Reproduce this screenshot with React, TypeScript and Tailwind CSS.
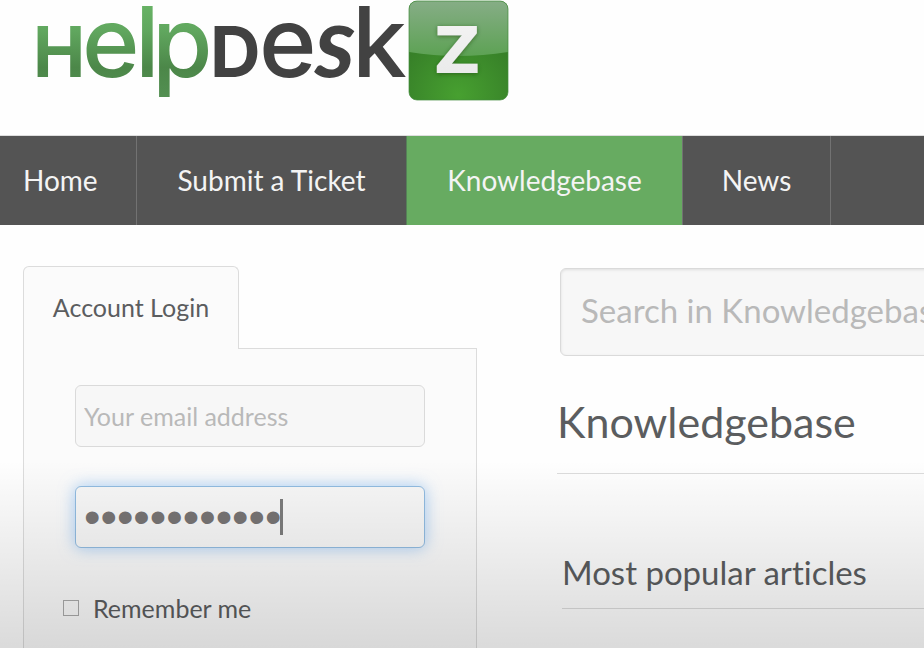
import { useState } from "react";

const navItems = [
  { label: "Home", className: "w-[137px] pl-[23px] text-left border-[#727272]" },
  { label: "Submit a Ticket", className: "w-[270px] text-center border-[#568158]" },
  { label: "Knowledgebase", className: "w-[276px] text-center bg-[#67ab61] border-[#727272]", active: true },
  { label: "News", className: "w-[148px] text-center border-[#727272]" },
];

function Logo() {
  return (
    <svg width="520" height="112" viewBox="0 0 520 112" role="img" aria-label="HelpDeskZ" className="block">
      <defs>
        <linearGradient id="leaf" gradientUnits="userSpaceOnUse" x1="0" y1="0" x2="0" y2="104">
          <stop offset="0" stopColor="#69b566" />
          <stop offset="0.3" stopColor="#60a65e" />
          <stop offset="0.65" stopColor="#4c8749" />
          <stop offset="1" stopColor="#549153" />
        </linearGradient>
        <radialGradient id="tile" cx="0.5" cy="0.95" r="0.75">
          <stop offset="0" stopColor="#47a030" />
          <stop offset="1" stopColor="#347a27" />
        </radialGradient>
        <linearGradient id="gloss" x1="0" y1="0" x2="0" y2="1">
          <stop offset="0" stopColor="#86ad86" />
          <stop offset="1" stopColor="#5da254" />
        </linearGradient>
        <linearGradient id="silver" x1="0" y1="0" x2="0" y2="1">
          <stop offset="0" stopColor="#f4f4f4" />
          <stop offset="1" stopColor="#e8e8e8" />
        </linearGradient>
        <filter id="shade" x="-20%" y="-20%" width="140%" height="140%">
          <feDropShadow dx="0" dy="1" stdDeviation="2" floodColor="#1d4a17" floodOpacity="0.6" />
        </filter>
        <clipPath id="tileShape">
          <rect x="409" y="1" width="99" height="99" rx="8" />
        </clipPath>
      </defs>
      <g fontFamily="Inter, sans-serif" fontWeight="500" fill="url(#leaf)">
        <text x="33" y="77" fontSize="70" fontWeight="700">H</text>
        <text x="82" y="77" fontSize="98">e</text>
        <text x="135" y="77" fontSize="98">l</text>
        <text x="152" y="77" fontSize="98">p</text>
      </g>
      <g fontFamily="Inter, sans-serif" fontWeight="500" fill="#424242">
        <text x="210" y="77" fontSize="70" fontWeight="700">D</text>
        <text x="259" y="77" fontSize="98">e</text>
        <text x="315" y="77" fontSize="100" fontWeight="700" fontStyle="italic" fontFamily="Lato, sans-serif">s</text>
        <text x="352" y="77" fontSize="98">k</text>
      </g>
      <g clipPath="url(#tileShape)">
        <rect x="409" y="1" width="99" height="99" fill="url(#tile)" />
        <path d="M409 1H508V52Q458 60 409 52Z" fill="url(#gloss)" />
      </g>
      <rect x="409" y="1" width="99" height="99" rx="8" fill="none" stroke="#438b3c" strokeOpacity="0.7" />
      <text x="434" y="73" fontSize="64" fontWeight="700" fontFamily="'DejaVu Sans', sans-serif" fill="url(#silver)" filter="url(#shade)">Z</text>
    </svg>
  );
}

export default function App() {
  const [email, setEmail] = useState("");
  const [password, setPassword] = useState("helpdeskpass");
  const [remember, setRemember] = useState(false);
  const [query, setQuery] = useState("");

  return (
    <div className="relative h-screen overflow-hidden bg-[#fefefe] font-['Lato',sans-serif] text-[#5b5d5f] [font-variant-ligatures:none]">
      <header className="h-[136px] border-b border-[#dedede]">
        <Logo />
      </header>

      <nav aria-label="Main" className="flex h-[89px] bg-[#545454] text-[28px] text-[#f4f4f4]">
        {navItems.map((item) => (
          <a
            key={item.label}
            href="#"
            aria-current={item.active ? "page" : undefined}
            className={`shrink-0 border-r leading-[89px] whitespace-nowrap ${item.className}`}
          >
            {item.label}
          </a>
        ))}
      </nav>

      <main className="flex gap-20 pt-[41px] pl-[23px]">
        <section className="w-[454px] shrink-0">
          <h2 className="relative z-10 -mb-px flex h-[83px] w-[216px] items-center justify-center rounded-t-md border border-b-0 border-[#dcdcdc] bg-[#fbfbfb] text-[25px]">
            Account Login
          </h2>
          <form className="h-[420px] border border-[#dcdcdc] bg-[#fbfbfb] pt-9 pl-[51px]">
            <input
              type="email"
              aria-label="Your email address"
              placeholder="Your email address"
              value={email}
              onChange={(e) => setEmail(e.target.value)}
              className="block h-[62px] w-[350px] rounded-md border border-[#dadada] bg-[#f7f7f7] px-2 text-[25px] outline-none placeholder:text-[#b9b9b9]"
            />
            <div className="relative mt-[39px] w-[350px]">
              <input
                type="password"
                aria-label="Password"
                value={password}
                onChange={(e) => setPassword(e.target.value)}
                className="block h-[62px] w-full rounded-md border border-[#91bbe0] bg-[#f7f7f7] px-2 font-['Liberation_Sans',sans-serif] text-[47px] text-[#777474] shadow-[0_0_16px_rgba(110,175,245,0.6)] outline-none"
              />
              <span className="absolute top-[13px] left-[205px] h-9 w-[3px] bg-[#7c7c7c]" />
            </div>
            <label className="-ml-3 mt-11 flex items-center gap-[14px] text-[25px] leading-8">
              <input
                type="checkbox"
                checked={remember}
                onChange={(e) => setRemember(e.target.checked)}
                className="size-4 appearance-none border border-[#aaaaaa] bg-[#fafafa] checked:bg-[#67ab61]"
              />
              Remember me
            </label>
          </form>
        </section>

        <section className="min-w-[600px] flex-1">
          <input
            type="search"
            aria-label="Search in Knowledgebase"
            placeholder="Search in Knowledgebase"
            value={query}
            onChange={(e) => setQuery(e.target.value)}
            className="mt-0.5 ml-[3px] block h-[88px] w-full rounded-md border border-[#dadada] bg-[#f7f7f7] px-5 pb-1 text-[33px] shadow-[inset_0_1px_3px_rgba(0,0,0,0.1)] outline-none placeholder:text-[#b9b9b9]"
          />
          <h1 className="mt-9 border-b border-[#dcdcdc] pb-[21px] text-[43px] leading-[60px]">Knowledgebase</h1>
          <h2 className="mt-[76px] ml-[5px] border-b border-[#dcdcdc] pb-[14px] text-[33px] leading-11">
            Most popular articles
          </h2>
        </section>
      </main>

      <div className="pointer-events-none absolute inset-x-0 bottom-0 z-20 h-[188px] bg-linear-to-b from-black/0 to-black/14" />
    </div>
  );
}
